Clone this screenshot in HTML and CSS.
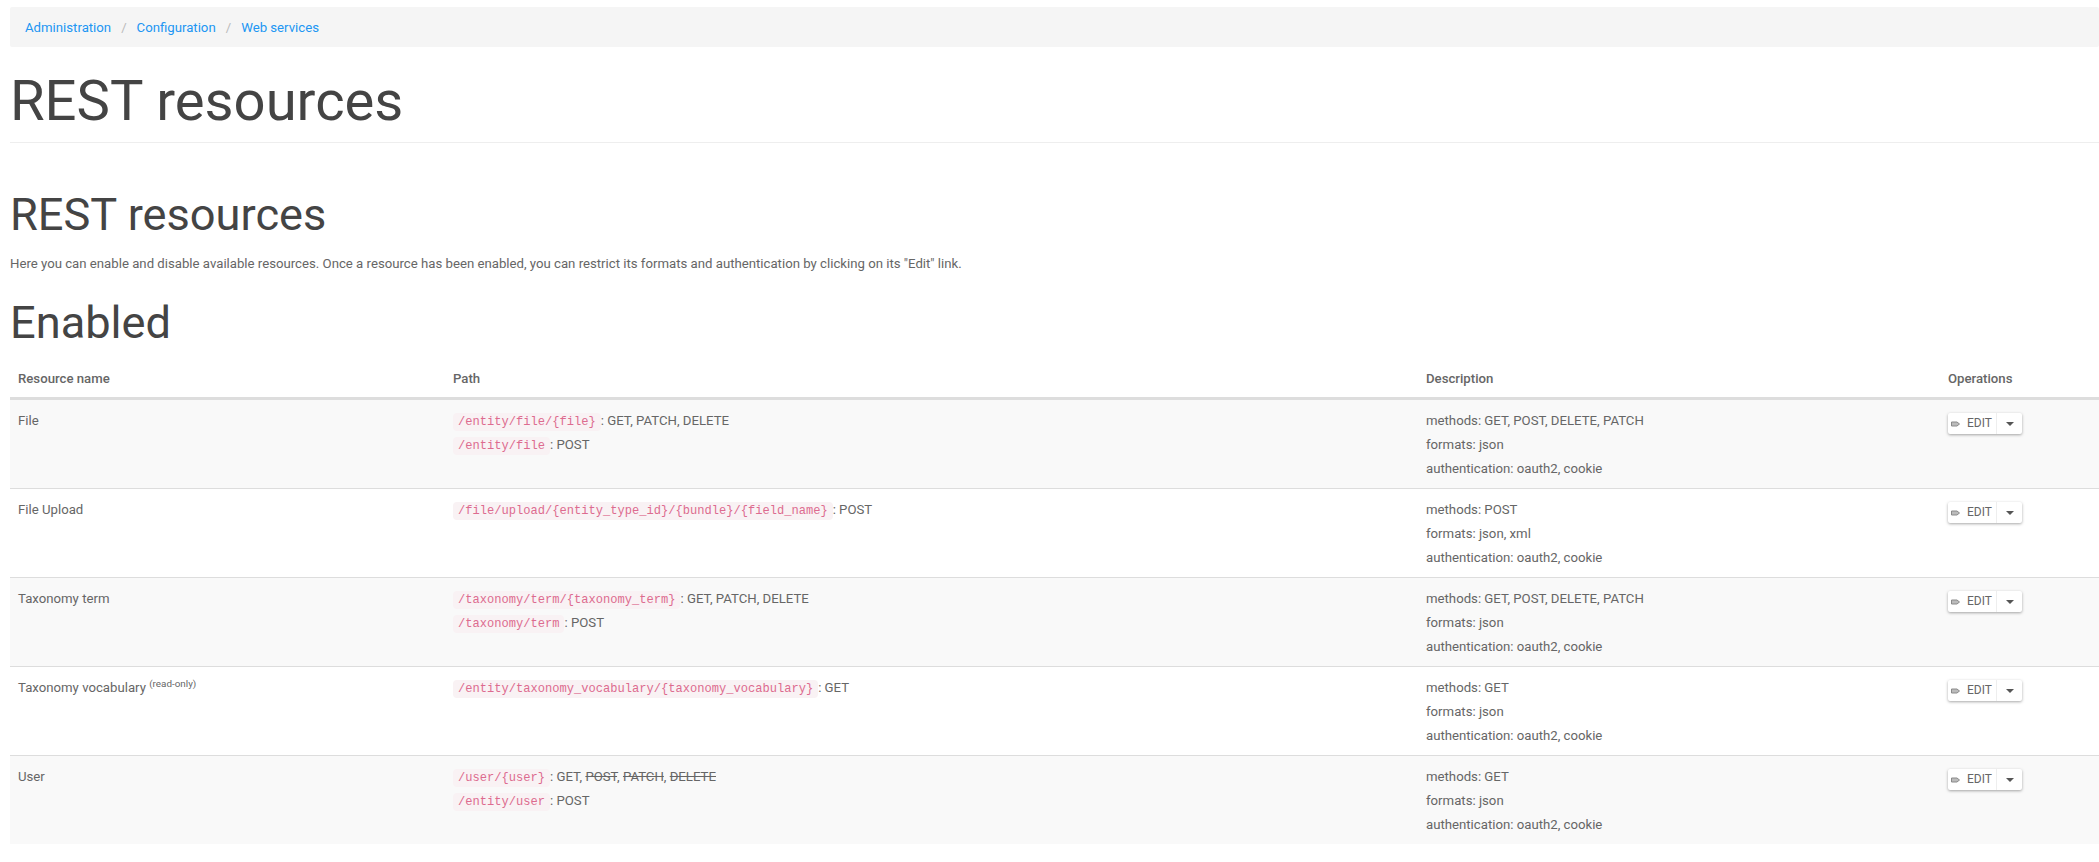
FILE: index.html
```html
<!DOCTYPE html>
<html lang="en">
<head>
  <meta charset="UTF-8" />
  <title>REST resources</title>
  <link rel="stylesheet" href="styles.css">
</head>
<body>
  <ol class="breadcrumb">
    <li><a href="#">Administration</a></li>
    <li><a href="#">Configuration</a></li>
    <li><a href="#">Web services</a></li>
  </ol>

  <h1 class="page-title">REST resources</h1>

  <h2 class="section-title">REST resources</h2>
  <p class="intro">Here you can enable and disable available resources. Once a resource has been enabled, you can restrict its formats and authentication by clicking on its "Edit" link.</p>

  <h2 class="enabled-title">Enabled</h2>

  <table class="resources">
    <colgroup>
      <col class="col-name"><col class="col-path"><col class="col-desc"><col class="col-ops">
    </colgroup>
    <thead>
      <tr><th>Resource name</th><th>Path</th><th>Description</th><th>Operations</th></tr>
    </thead>
    <tbody>
      <tr class="odd">
        <td>File</td>
        <td>
          <div class="line"><code>/entity/file/{file}</code>: GET, PATCH, DELETE</div>
          <div class="line"><code>/entity/file</code>: POST</div>
        </td>
        <td>
          <div class="line">methods: GET, POST, DELETE, PATCH</div>
          <div class="line">formats: json</div>
          <div class="line">authentication: oauth2, cookie</div>
        </td>
        <td>
          <div class="dropbutton">
            <a class="edit" href="#"><svg class="pencil" viewBox="0 0 9 6"><path d="M.5 1h5.5l2.5 2-2.5 2H.5z" fill="#bbb" stroke="#8a8a8a" stroke-width="1"/></svg>EDIT</a>
            <span class="toggle"><i class="caret"></i></span>
          </div>
        </td>
      </tr>
      <tr>
        <td>File Upload</td>
        <td>
          <div class="line"><code>/file/upload/{entity_type_id}/{bundle}/{field_name}</code>: POST</div>
        </td>
        <td>
          <div class="line">methods: POST</div>
          <div class="line">formats: json, xml</div>
          <div class="line">authentication: oauth2, cookie</div>
        </td>
        <td>
          <div class="dropbutton">
            <a class="edit" href="#"><svg class="pencil" viewBox="0 0 9 6"><path d="M.5 1h5.5l2.5 2-2.5 2H.5z" fill="#bbb" stroke="#8a8a8a" stroke-width="1"/></svg>EDIT</a>
            <span class="toggle"><i class="caret"></i></span>
          </div>
        </td>
      </tr>
      <tr class="odd">
        <td>Taxonomy term</td>
        <td>
          <div class="line"><code>/taxonomy/term/{taxonomy_term}</code>: GET, PATCH, DELETE</div>
          <div class="line"><code>/taxonomy/term</code>: POST</div>
        </td>
        <td>
          <div class="line">methods: GET, POST, DELETE, PATCH</div>
          <div class="line">formats: json</div>
          <div class="line">authentication: oauth2, cookie</div>
        </td>
        <td>
          <div class="dropbutton">
            <a class="edit" href="#"><svg class="pencil" viewBox="0 0 9 6"><path d="M.5 1h5.5l2.5 2-2.5 2H.5z" fill="#bbb" stroke="#8a8a8a" stroke-width="1"/></svg>EDIT</a>
            <span class="toggle"><i class="caret"></i></span>
          </div>
        </td>
      </tr>
      <tr>
        <td>Taxonomy vocabulary <sup>(read-only)</sup></td>
        <td>
          <div class="line"><code>/entity/taxonomy_vocabulary/{taxonomy_vocabulary}</code>: GET</div>
        </td>
        <td>
          <div class="line">methods: GET</div>
          <div class="line">formats: json</div>
          <div class="line">authentication: oauth2, cookie</div>
        </td>
        <td>
          <div class="dropbutton">
            <a class="edit" href="#"><svg class="pencil" viewBox="0 0 9 6"><path d="M.5 1h5.5l2.5 2-2.5 2H.5z" fill="#bbb" stroke="#8a8a8a" stroke-width="1"/></svg>EDIT</a>
            <span class="toggle"><i class="caret"></i></span>
          </div>
        </td>
      </tr>
      <tr class="odd last">
        <td>User</td>
        <td>
          <div class="line"><code>/user/{user}</code>: GET, <del>POST</del>, <del>PATCH</del>, <del>DELETE</del></div>
          <div class="line"><code>/entity/user</code>: POST</div>
        </td>
        <td>
          <div class="line">methods: GET</div>
          <div class="line">formats: json</div>
          <div class="line">authentication: oauth2, cookie</div>
        </td>
        <td>
          <div class="dropbutton">
            <a class="edit" href="#"><svg class="pencil" viewBox="0 0 9 6"><path d="M.5 1h5.5l2.5 2-2.5 2H.5z" fill="#bbb" stroke="#8a8a8a" stroke-width="1"/></svg>EDIT</a>
            <span class="toggle"><i class="caret"></i></span>
          </div>
        </td>
      </tr>
    </tbody>
  </table>
</body>
</html>
```

FILE: styles.css
```css
html, body {
  overflow: hidden;
}

body {
  margin: 0;
  padding: 7px 0 0 10px;
  background: #fff;
  color: #666;
  font-family: Roboto, Arial, sans-serif;
  font-size: 13.2px;
  line-height: 24px;
}

a {
  color: #2196f3;
  text-decoration: none;
}

.breadcrumb {
  box-sizing: border-box;
  display: flex;
  align-items: center;
  height: 40px;
  margin: 0;
  padding: 1px 15px 0;
  list-style: none;
  background: #f5f5f5;
  border-radius: 2px;
}

.breadcrumb li + li::before {
  content: "/";
  padding: 0 10px;
  color: #bbb;
}

.page-title {
  margin: 17px 0 0;
  padding-bottom: 4px;
  border-bottom: 1px solid #eee;
  color: #444;
  font-size: 56.2px;
  font-weight: 400;
  line-height: 74px;
}

.section-title {
  margin: 42px 0 0;
  color: #444;
  font-size: 45.2px;
  font-weight: 400;
  line-height: 60px;
}

.intro {
  margin: 7px 0 0;
}

.enabled-title {
  margin: 17px 0 0;
  color: #444;
  font-size: 45.2px;
  font-weight: 400;
  line-height: 60px;
}

.resources {
  width: 2089px;
  margin-top: 4px;
  table-layout: fixed;
  border-collapse: collapse;
}

.col-name { width: 435px; }
.col-path { width: 973px; }
.col-desc { width: 522px; }
.col-ops { width: 159px; }

.resources th {
  padding: 10px 8px 6px;
  border-bottom: 3px solid #ddd;
  font-weight: 500;
  text-align: left;
}

.resources td {
  padding: 9px 8px 7px;
  vertical-align: top;
  border-bottom: 1px solid #ddd;
}

.resources tr.odd {
  background: #f9f9f9;
}

.resources tr.last td {
  border-bottom: 0;
}

.line {
  height: 24px;
}

code {
  padding: 2px 5px;
  background: #f9f2f4;
  border-radius: 4px;
  color: #dd6b8f;
  font-family: "Liberation Mono", monospace;
  font-size: 12.08px;
}

sup {
  font-size: 9.9px;
  line-height: 0;
}

.dropbutton {
  display: flex;
  align-items: center;
  width: 74px;
  height: 21px;
  margin-top: 4px;
  background: #fff;
  border-radius: 2px;
  box-shadow: 0 1px 3px rgba(0, 0, 0, 0.35);
  font-size: 12px;
  line-height: 21px;
}

.edit {
  display: flex;
  align-items: center;
  width: 45px;
  height: 21px;
  padding-left: 3px;
  border-right: 1px solid #eee;
  color: #666;
}

.pencil {
  width: 9px;
  height: 6px;
  margin-right: 7px;
}

.toggle {
  display: flex;
  align-items: center;
  justify-content: center;
  width: 25px;
  height: 21px;
}

.caret {
  width: 0;
  height: 0;
  border-top: 4px solid #555;
  border-left: 4px solid transparent;
  border-right: 4px solid transparent;
}
```
